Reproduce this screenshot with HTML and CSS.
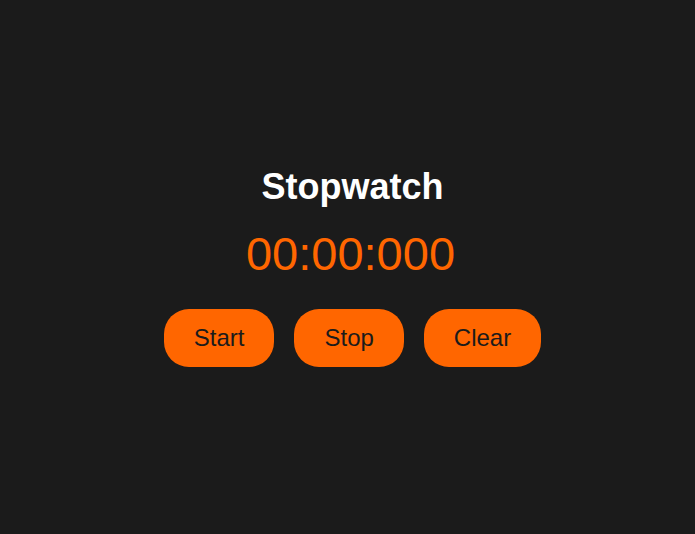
FILE: index.html
```html
<!DOCTYPE html>
<html lang="en">
<head>
<meta charset="utf-8">
<title>Stopwatch</title>
<link rel="stylesheet" href="styles.css">
</head>
<body>
<main class="stopwatch">
  <h1 class="title">Stopwatch</h1>
  <div class="time">00:00:000</div>
  <div class="controls">
    <button class="btn">Start</button>
    <button class="btn">Stop</button>
    <button class="btn">Clear</button>
  </div>
</main>
</body>
</html>
```
FILE: styles.css
```css
html, body {
  margin: 0;
  padding: 0;
  background: #1b1b1b;
}
body {
  min-height: 100vh;
  display: flex;
  align-items: center;
  justify-content: center;
  font-family: "Liberation Sans", Arial, sans-serif;
}
.stopwatch {
  display: flex;
  flex-direction: column;
  align-items: center;
  padding-left: 10px;
}
.title {
  margin: 0 0 24px;
  font-size: 36px;
  line-height: 40px;
  font-weight: bold;
  color: #ffffff;
}
.time {
  margin: 0 0 32px;
  padding-right: 4px;
  font-size: 47px;
  line-height: 46px;
  color: #ff6600;
}
.controls {
  display: flex;
  gap: 20px;
}
.btn {
  font-family: "Liberation Sans", Arial, sans-serif;
  font-size: 24px;
  line-height: 28px;
  padding: 15px 30px;
  border: none;
  border-radius: 25px;
  background: #ff6600;
  color: #1b1b1b;
}
```
